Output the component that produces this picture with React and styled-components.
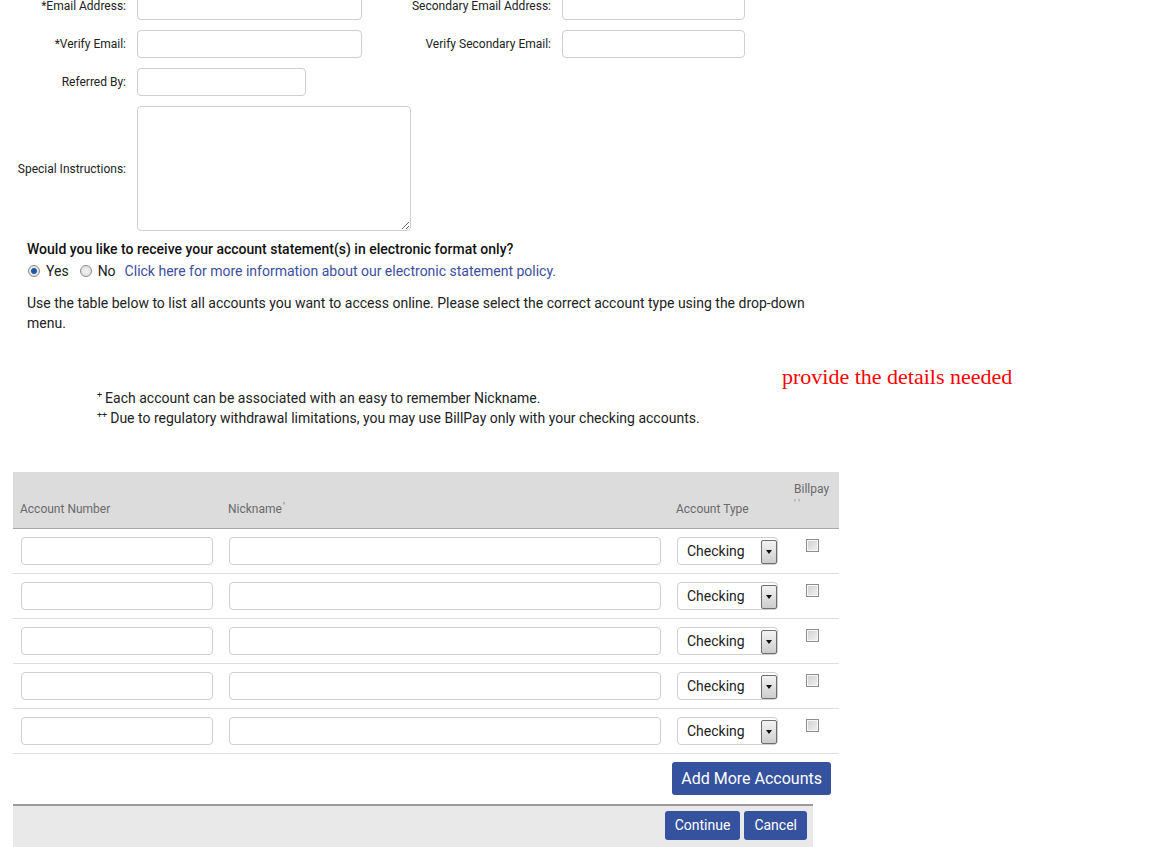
import React from "react";
import styled, { createGlobalStyle } from "styled-components";

const GlobalStyle = createGlobalStyle`
  html, body {
    margin: 0;
    padding: 0;
    background: #fff;
    overflow: hidden;
  }
  body {
    font-family: Roboto, "Liberation Sans", Arial, sans-serif;
    color: #222;
  }
`;

const Page = styled.div`
  width: 1170px;
  height: 847px;
  overflow: hidden;
`;

const FormGrid = styled.div`
  display: grid;
  grid-template-columns: 126px 225px 178px 183px;
  grid-template-rows: 28px 28px 28px 125px;
  column-gap: 11px;
  row-gap: 10px;
  margin-top: -8px;
  align-items: center;
`;

const Label = styled.label`
  grid-column: ${(p) => p.col || 1};
  text-align: right;
  font-size: 12px;
  color: #222;
  white-space: nowrap;
`;

const TextInput = styled.input`
  box-sizing: border-box;
  display: block;
  width: ${(p) => p.w || "100%"};
  height: 28px;
  border: 1px solid #cfcfcf;
  border-radius: 4px;
  background: #fff;
  padding: 0 8px;
  font-family: inherit;
  font-size: 14px;
  outline: none;
`;

const TextArea = styled.textarea`
  grid-column: 2 / span 2;
  display: block;
  box-sizing: border-box;
  width: 274px;
  height: 125px;
  border: 1px solid #cfcfcf;
  border-radius: 4px;
  resize: both;
  font-family: inherit;
  outline: none;
`;

const Section = styled.div`
  padding-left: 27px;
  margin-top: ${(p) => p.mt || 0}px;
  max-width: 790px;
`;

const Question = styled.div`
  font-size: 14px;
  font-weight: 500;
  line-height: 20px;
  color: #111;
`;

const RadioRow = styled.div`
  display: flex;
  align-items: center;
  height: 23px;
  font-size: 14px;
`;

const Radio = styled.input.attrs({ type: "radio" })`
  appearance: none;
  width: 12px;
  height: 12px;
  margin: 0 6px 0 1px;
  border-radius: 50%;
  border: 1px solid #8a8a8a;
  background: radial-gradient(circle, #f4f4f4 0, #d9d9d9 100%);
  box-sizing: border-box;
  &:checked {
    background: radial-gradient(circle, #1d5aa6 0, #1d5aa6 2.5px, #e8e8e8 3.5px, #d6d6d6 100%);
  }
`;

const RadioText = styled.span`
  margin-right: 10px;
`;

const Link = styled.a`
  color: #3c4ea0;
  text-decoration: none;
  margin-left: -1px;
`;

const Paragraph = styled.p`
  margin: 11px 0 0;
  font-size: 14px;
  line-height: 20px;
  color: #222;
`;

const NotesArea = styled.div`
  display: grid;
  grid-template-columns: 782px auto;
  margin-top: 32px;
`;

const Footnotes = styled.div`
  padding-left: 97px;
  padding-top: 23px;
  font-size: 14px;
  line-height: 20px;
  color: #222;
  sup {
    font-size: 9px;
    vertical-align: 5px;
    line-height: 0;
    margin-right: 3px;
  }
`;

const RedNote = styled.div`
  font-family: "Liberation Serif", "Times New Roman", serif;
  font-size: 22px;
  line-height: 24px;
  color: #ff0000;
`;

const TableWrap = styled.div`
  margin: 44px 0 0 13px;
  width: 826px;
`;

const Table = styled.table`
  width: 826px;
  border-collapse: collapse;
  table-layout: fixed;
`;

const Col = styled.col`
  width: ${(p) => p.w}px;
`;

const HeadRow = styled.tr`
  background: #dcdcdc;
  height: 56px;
  border-bottom: 1px solid #a9a9a9;
`;

const HeadCell = styled.th`
  text-align: left;
  font-weight: 400;
  font-size: 12px;
  color: #6a6a6a;
  padding: ${(p) => (p.top ? "9px 7px 0 8px" : "0 7px 11px")};
  vertical-align: ${(p) => (p.top ? "top" : "bottom")};
  line-height: 16px;
  white-space: nowrap;
`;

const Tick = styled.span`
  font-size: 11px;
  color: #777;
  vertical-align: 3px;
  margin-left: 1px;
`;

const TickLine = styled.div`
  font-size: 10px;
  letter-spacing: 3px;
  color: #888;
  line-height: 14px;
`;

const Row = styled.tr`
  height: 45px;
  border-bottom: 1px solid #dedede;
`;

const Cell = styled.td`
  padding: 0 8px;
  vertical-align: middle;
`;

const SelectBox = styled.div`
  box-sizing: border-box;
  width: 101px;
  height: 28px;
  border: 1px solid #cfcfcf;
  border-radius: 4px;
  display: flex;
  align-items: center;
  padding-left: 9px;
  font-size: 14px;
  color: #222;
  background: #fff;
`;

const SelectArrow = styled.span`
  margin-left: auto;
  box-sizing: border-box;
  width: 16px;
  height: 24px;
  margin-top: 2px;
  border: 1px solid #6e6e6e;
  border-radius: 2px;
  background: linear-gradient(#f3f3f3, #cdcdcd);
  display: flex;
  align-items: center;
  justify-content: center;
  &::after {
    content: "";
    border-left: 3.5px solid transparent;
    border-right: 3.5px solid transparent;
    border-top: 4px solid #111;
  }
`;

const CheckBox = styled.input.attrs({ type: "checkbox" })`
  appearance: none;
  box-sizing: border-box;
  width: 13px;
  height: 13px;
  margin: 0 0 6px 12px;
  border: 1px solid #8d8d8d;
  background: linear-gradient(135deg, #cfcfcf, #f2f2f2);
  box-shadow: inset 0 0 0 1px #f6f6f6;
`;

const ActionsRow = styled.div`
  display: flex;
  justify-content: flex-end;
  padding-right: 8px;
  margin-top: 8px;
`;

const BlueButton = styled.button`
  height: ${(p) => (p.big ? 33 : 29)}px;
  padding: 0 ${(p) => (p.big ? 9 : 10)}px;
  background: #34529d;
  color: #fff;
  border: none;
  border-radius: 3px;
  font-family: inherit;
  font-size: ${(p) => (p.big ? 16 : 14)}px;
  cursor: pointer;
`;

const Footer = styled.div`
  margin: 9px 0 0 13px;
  width: 800px;
  box-sizing: border-box;
  height: 60px;
  border-top: 2px solid #9b9b9b;
  background: #e9e9e9;
  display: flex;
  justify-content: flex-end;
  align-items: flex-start;
  gap: 4px;
  padding: 5px 6px 0;
`;

const accounts = [1, 2, 3, 4, 5];

export default function App() {
  return (
    <Page>
      <GlobalStyle />
      <FormGrid>
        <Label>*Email Address:</Label>
        <TextInput />
        <Label col={3}>Secondary Email Address:</Label>
        <TextInput />

        <Label>*Verify Email:</Label>
        <TextInput />
        <Label col={3}>Verify Secondary Email:</Label>
        <TextInput />

        <Label>Referred By:</Label>
        <TextInput w="169px" />
        <div />
        <div />

        <Label>Special Instructions:</Label>
        <TextArea />
      </FormGrid>

      <Section mt={8}>
        <Question>Would you like to receive your account statement(s) in electronic format only?</Question>
        <RadioRow>
          <Radio name="estmt" defaultChecked />
          <RadioText>Yes</RadioText>
          <Radio name="estmt" />
          <RadioText>No</RadioText>
          <Link href="#">Click here for more information about our electronic statement policy.</Link>
        </RadioRow>
        <Paragraph>
          Use the table below to list all accounts you want to access online. Please select the correct account type using the drop-down menu.
        </Paragraph>
      </Section>

      <NotesArea>
        <Footnotes>
          <div>
            <sup>+</sup>Each account can be associated with an easy to remember Nickname.
          </div>
          <div>
            <sup>++</sup>Due to regulatory withdrawal limitations, you may use BillPay only with your checking accounts.
          </div>
        </Footnotes>
        <RedNote>provide the details needed</RedNote>
      </NotesArea>

      <TableWrap>
        <Table>
          <colgroup>
            <Col w={208} />
            <Col w={448} />
            <Col w={117} />
            <Col w={53} />
          </colgroup>
          <thead>
            <HeadRow>
              <HeadCell>Account Number</HeadCell>
              <HeadCell>
                Nickname<Tick>'</Tick>
              </HeadCell>
              <HeadCell>Account Type</HeadCell>
              <HeadCell top>
                Billpay
                <TickLine>''</TickLine>
              </HeadCell>
            </HeadRow>
          </thead>
          <tbody>
            {accounts.map((n) => (
              <Row key={n}>
                <Cell>
                  <TextInput />
                </Cell>
                <Cell>
                  <TextInput />
                </Cell>
                <Cell>
                  <SelectBox>
                    Checking
                    <SelectArrow />
                  </SelectBox>
                </Cell>
                <Cell>
                  <CheckBox />
                </Cell>
              </Row>
            ))}
          </tbody>
        </Table>
        <ActionsRow>
          <BlueButton big>Add More Accounts</BlueButton>
        </ActionsRow>
      </TableWrap>

      <Footer>
        <BlueButton>Continue</BlueButton>
        <BlueButton>Cancel</BlueButton>
      </Footer>
    </Page>
  );
}
